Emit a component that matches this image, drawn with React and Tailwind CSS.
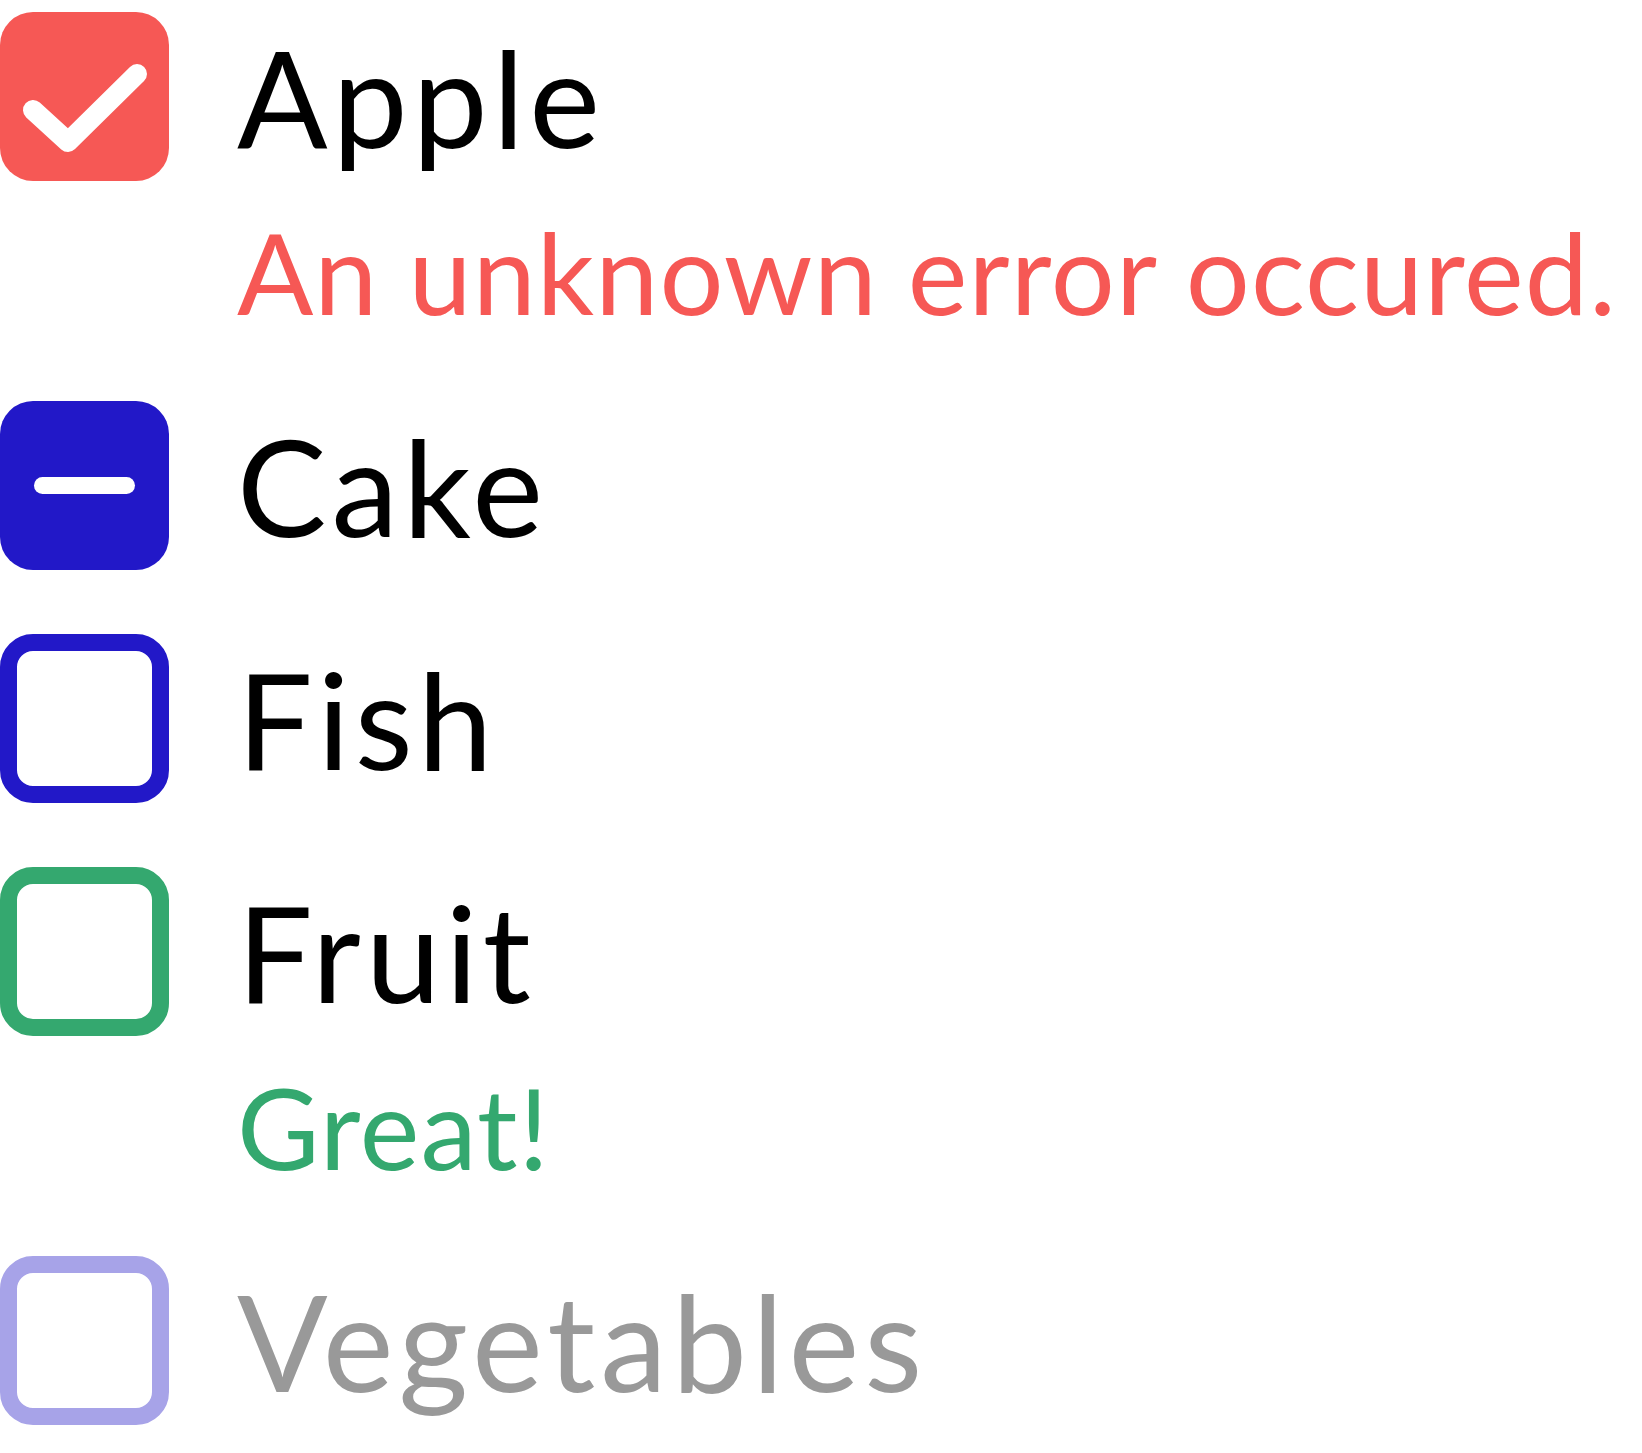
import { useState } from "react";

const items = [
    { label: "Apple", state: "checked", tone: "error", helper: "An unknown error occured." },
    { label: "Cake", state: "mixed" },
    { label: "Fish", state: "empty" },
    { label: "Fruit", state: "empty", tone: "success", helper: "Great!" },
    { label: "Vegetables", state: "empty", disabled: true },
];

function Box({ state, tone, disabled }) {
    if (state === "checked") {
        return (
            <span className="flex h-[169px] w-[169px] shrink-0 items-center justify-center rounded-[33px] bg-[#f65855]">
                <svg width="169" height="169" viewBox="0 0 169 169" fill="none">
                    <path
                        d="M33 98 L68 130 L137 62"
                        stroke="#fff"
                        strokeWidth="20"
                        strokeLinecap="round"
                        strokeLinejoin="round"
                    />
                </svg>
            </span>
        );
    }
    if (state === "mixed") {
        return (
            <span className="flex h-[169px] w-[169px] shrink-0 items-center justify-center rounded-[33px] bg-[#2218c8]">
                <span className="block h-[17px] w-[101px] rounded-full bg-white" />
            </span>
        );
    }
    const border = disabled
        ? "border-[#a7a3e8]"
        : tone === "success"
        ? "border-[#34a86f]"
        : "border-[#2218c8]";
    return (
        <span className={`block h-[169px] w-[169px] shrink-0 rounded-[33px] border-[17px] bg-white ${border}`} />
    );
}

export default function App() {
    const [list] = useState(items);

    return (
        <div className="flex flex-col gap-[40px] bg-white font-['Lato',sans-serif]">
            {list.map((item) => (
                <div key={item.label} className="flex flex-col">
                    <label className="flex h-[193px] items-center gap-[68px]">
                        <Box state={item.state} tone={item.tone} disabled={item.disabled} />
                        <span
                            className={`whitespace-nowrap text-[134px] leading-[193px] tracking-[5px] ${
                                item.disabled ? "text-[#999999]" : "text-black"
                            }`}
                        >
                            {item.label}
                        </span>
                    </label>
                    {item.helper && (
                        <p
                            className={`whitespace-nowrap pl-[237px] text-[113px] leading-[156px] tracking-[1.1px] ${
                                item.tone === "error" ? "text-[#f65855]" : "text-[#34a86f]"
                            }`}
                        >
                            {item.helper}
                        </p>
                    )}
                </div>
            ))}
        </div>
    );
}
